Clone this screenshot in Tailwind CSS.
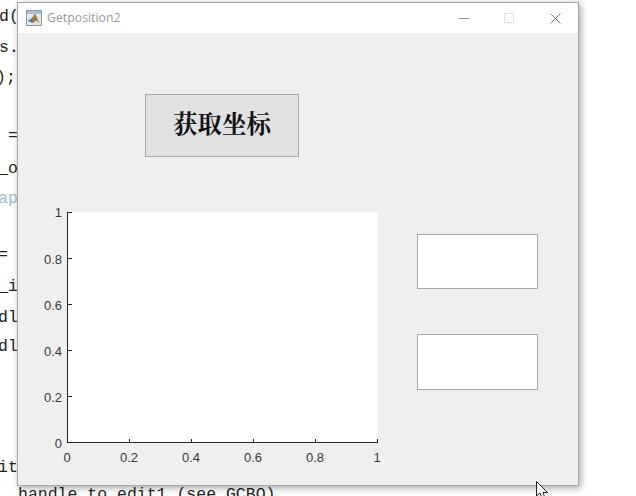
<!DOCTYPE html>
<html>
<head>
<meta charset="utf-8">
<script src="https://cdn.jsdelivr.net/npm/@tailwindcss/browser@4"></script>
</head>
<body class="bg-white overflow-hidden">
<div class="relative w-[636px] h-[496px] overflow-hidden bg-white">
  <!-- code behind the window -->
  <div class="absolute left-0 top-0 w-[30px] h-[496px] font-['Liberation_Mono',monospace] text-[16.5px] text-[#222]">
    <div class="absolute left-[-1px] top-[5px]">d(</div>
    <div class="absolute left-[-1px] top-[36px]">s.</div>
    <div class="absolute left-[-4px] top-[66px]">);</div>
    <div class="absolute left-[8px] top-[124px]">=</div>
    <div class="absolute left-[-2px] top-[157px]">_o</div>
    <div class="absolute left-[-2px] top-[187px] text-[#9dbcd8]">ap</div>
    <div class="absolute left-[-2px] top-[243px]">=</div>
    <div class="absolute left-[-2px] top-[275px]">_i</div>
    <div class="absolute left-[-2px] top-[306px]">dl</div>
    <div class="absolute left-[-2px] top-[335px]">dl</div>
    <div class="absolute left-[-2px] top-[456px]">it</div>
  </div>
  <div class="absolute left-[18px] top-[485px] font-['Liberation_Mono',monospace] text-[16.5px] leading-[20px] text-[#222] whitespace-pre">handle to edit1 (see GCBO)</div>

  <!-- window -->
  <div class="absolute left-[17px] top-[2px] w-[562px] h-[484px] flex flex-col border border-[#a8a8a8] bg-[#efefef] shadow-[2px_2px_7px_rgba(0,0,0,0.35)]">
    <div class="h-[30px] bg-white flex items-center shrink-0">
      <svg class="ml-[8px] w-[16px] h-[16px]" viewBox="0 0 16 16">
        <rect x="0.5" y="0.5" width="15" height="15" fill="#dfe7f0" stroke="#8a97a5"/>
        <rect x="1" y="1" width="14" height="3" fill="#a9c0d8"/>
        <path d="M2 11 L6 8 L9 3.5 L13.5 13 L10 10.5 L7 13 Z" fill="#b5752a"/>
        <path d="M2 11 L6 8 L7 13 Z" fill="#3d7fc0"/>
      </svg>
      <span class="ml-[5px] font-['Open_Sans',sans-serif] text-[12.3px] text-[#9b9b9b]">Getposition2</span>
      <div class="ml-auto flex items-center mr-[17px]">
        <svg class="w-[10px] h-[10px]" viewBox="0 0 10 10"><path d="M0 5.5H10" stroke="#8c8c8c"/></svg>
        <svg class="ml-[35px] w-[10px] h-[10px]" viewBox="0 0 10 10"><rect x="0.5" y="0.5" width="9" height="9" fill="none" stroke="#e2e2e2"/></svg>
        <svg class="ml-[36px] w-[11px] h-[11px]" viewBox="0 0 11 11"><path d="M0.5 0.5L10.5 10.5M10.5 0.5L0.5 10.5" stroke="#7f7f7f"/></svg>
      </div>
    </div>
    <div class="relative flex-1 pt-[61px] pl-[127px]">
      <button class="w-[154px] h-[63px] pb-[5px] bg-[#e1e1e1] border border-[#a9a9a9] font-['Noto_Serif_CJK_SC','Liberation_Serif','Noto_Sans_CJK_SC',serif] font-bold text-[24.5px] text-[#111] flex items-center justify-center">获取坐标</button>
      <div class="flex items-start mt-[55px] -ml-[78px]">
        <!-- axes -->
        <div class="relative w-[311px] h-[231px] bg-white border-l border-b border-[#262626] shrink-0 font-['Liberation_Sans',sans-serif] text-[13px] leading-[14px] text-[#3a3a3a]">
          <span class="absolute left-0 top-0 w-[4px] h-px bg-[#262626]"></span>
          <span class="absolute left-0 top-[46px] w-[4px] h-px bg-[#262626]"></span>
          <span class="absolute left-0 top-[92px] w-[4px] h-px bg-[#262626]"></span>
          <span class="absolute left-0 top-[138px] w-[4px] h-px bg-[#262626]"></span>
          <span class="absolute left-0 top-[184px] w-[4px] h-px bg-[#262626]"></span>
          <span class="absolute left-[61px] bottom-0 w-px h-[3px] bg-[#262626]"></span>
          <span class="absolute left-[123px] bottom-0 w-px h-[3px] bg-[#262626]"></span>
          <span class="absolute left-[185px] bottom-0 w-px h-[3px] bg-[#262626]"></span>
          <span class="absolute left-[247px] bottom-0 w-px h-[3px] bg-[#262626]"></span>
          <span class="absolute left-[309px] bottom-0 w-px h-[3px] bg-[#262626]"></span>
          <span class="absolute right-[316px] top-[-6px]">1</span>
          <span class="absolute right-[316px] top-[41px]">0.8</span>
          <span class="absolute right-[316px] top-[87px]">0.6</span>
          <span class="absolute right-[316px] top-[133px]">0.4</span>
          <span class="absolute right-[316px] top-[179px]">0.2</span>
          <span class="absolute right-[316px] top-[225px]">0</span>
          <span class="absolute left-[-1px] top-[239px] -translate-x-1/2">0</span>
          <span class="absolute left-[61px] top-[239px] -translate-x-1/2">0.2</span>
          <span class="absolute left-[123px] top-[239px] -translate-x-1/2">0.4</span>
          <span class="absolute left-[185px] top-[239px] -translate-x-1/2">0.6</span>
          <span class="absolute left-[247px] top-[239px] -translate-x-1/2">0.8</span>
          <span class="absolute left-[309px] top-[239px] -translate-x-1/2">1</span>
        </div>
        <div class="ml-[39px] mt-[22px] flex flex-col gap-[45px]">
          <div class="w-[121px] h-[55px] bg-white border border-[#a9a9a9]"></div>
          <div class="w-[121px] h-[56px] bg-white border border-[#a9a9a9]"></div>
        </div>
      </div>
    </div>
  </div>

  <!-- cursor -->
  <svg class="absolute left-[536px] top-[481px] w-[13px] h-[18px]" viewBox="0 0 13 18">
    <path d="M0.5 0.5V15L4 12L6 17H9L7 11.5H11.5Z" fill="#fff" stroke="#222"/>
  </svg>
</div>
</body>
</html>
